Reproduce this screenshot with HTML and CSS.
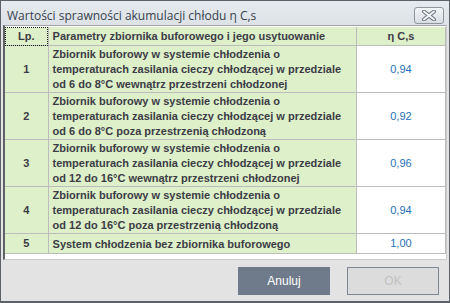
FILE: index.html
```html
<!DOCTYPE html>
<html lang="pl">
<head>
    <meta charset="UTF-8">
    <title>Wartości sprawności akumulacji chłodu</title>
    <link rel="stylesheet" href="styles.css">
</head>
<body>
    <div class="window">
        <div class="titlebar">
            <span class="title">Wartości sprawności akumulacji chłodu η C,s</span>
            <button class="close" title="Zamknij">
                <svg width="16" height="11" viewBox="0 0 16 11">
                    <path d="M3 1.5 L13 9.5 M13 1.5 L3 9.5" stroke="#6a737d" stroke-width="4" stroke-linecap="round"/>
                    <path d="M3 1.5 L13 9.5 M13 1.5 L3 9.5" stroke="#f4f6f8" stroke-width="2" stroke-linecap="round"/>
                </svg>
            </button>
        </div>

        <div class="pane">
            <table class="grid">
                <colgroup>
                    <col class="c-lp">
                    <col class="c-desc">
                    <col class="c-val">
                </colgroup>
                <tr class="head">
                    <th class="focus">Lp.</th>
                    <th class="left">Parametry zbiornika buforowego i jego usytuowanie</th>
                    <th>η C,s</th>
                </tr>
                <tr>
                    <td class="lp">1</td>
                    <td class="desc">Zbiornik buforowy w systemie chłodzenia o temperaturach zasilania cieczy chłodzącej w przedziale od 6 do 8°C wewnątrz przestrzeni chłodzonej</td>
                    <td class="val">0,94</td>
                </tr>
                <tr>
                    <td class="lp">2</td>
                    <td class="desc">Zbiornik buforowy w systemie chłodzenia o temperaturach zasilania cieczy chłodzącej w przedziale od 6 do 8°C poza przestrzenią chłodzoną</td>
                    <td class="val">0,92</td>
                </tr>
                <tr>
                    <td class="lp">3</td>
                    <td class="desc">Zbiornik buforowy w systemie chłodzenia o temperaturach zasilania cieczy chłodzącej w przedziale od 12 do 16°C wewnątrz przestrzeni chłodzonej</td>
                    <td class="val">0,96</td>
                </tr>
                <tr>
                    <td class="lp">4</td>
                    <td class="desc">Zbiornik buforowy w systemie chłodzenia o temperaturach zasilania cieczy chłodzącej w przedziale od 12 do 16°C poza przestrzenią chłodzoną</td>
                    <td class="val">0,94</td>
                </tr>
                <tr class="single">
                    <td class="lp">5</td>
                    <td class="desc">System chłodzenia bez zbiornika buforowego</td>
                    <td class="val">1,00</td>
                </tr>
            </table>
        </div>

        <div class="footer">
            <button class="btn primary">Anuluj</button>
            <button class="btn" disabled>OK</button>
        </div>
    </div>
</body>
</html>
```

FILE: styles.css
```css
html, body {
    margin: 0;
    padding: 0;
}
body {
    width: 450px;
    height: 303px;
    overflow: hidden;
    font-family: "Liberation Sans", Arial, sans-serif;
}
.window {
    box-sizing: border-box;
    width: 450px;
    height: 303px;
    border: 1px solid #5d6268;
    border-bottom-width: 2px;
    background: #e3e3e3;
    display: flex;
    flex-direction: column;
}
.titlebar {
    height: 24px;
    flex: none;
    display: flex;
    align-items: center;
    justify-content: space-between;
    padding: 0 5px 0 6px;
    background: linear-gradient(#e6eaee, #dde2e7);
}
.title {
    font-family: "Open Sans", sans-serif;
    font-size: 12px;
    color: #37424d;
    margin-top: 4px;
}
.close {
    width: 30px;
    height: 17px;
    margin-top: 4px;
    padding: 0;
    border: 1px solid #8d969f;
    border-radius: 3px;
    background: linear-gradient(#f3f5f7, #d9dee3);
    display: flex;
    align-items: center;
    justify-content: center;
}
.pane {
    flex: none;
    margin: 0 2px 0 2px;
    height: 232px;
    background: #fff;
    border-left: 2px solid #5f6368;
    border-top: 1px solid #a0a4a8;
    border-right: 1px solid #c9cbcd;
    border-bottom: 1px solid #c9cbcd;
    padding: 1px 0 0 0;
}
.grid {
    border-collapse: collapse;
    width: 441px;
    table-layout: fixed;
    font-size: 11px;
    color: #3c3c46;
}
.c-lp { width: 43px; }
.c-desc { width: 308px; }
.c-val { width: 89px; }
.grid th, .grid td {
    border: 1px solid #bcbcbc;
    padding: 0 4px;
    line-height: 15px;
}
.grid tr:first-child th { border-top: none; }
.grid th:first-child, .grid td:first-child { border-left: none; }
.head th {
    height: 18px;
    background: #ddf0c9;
    font-weight: bold;
    text-align: center;
}
.head th.left { text-align: left; }
.head th.focus {
    outline: 1px dotted #222;
    outline-offset: -1px;
}
.lp, .desc {
    background: #ddf0c9;
    font-weight: bold;
}
.lp { text-align: center; }
.desc { padding: 1px 4px 0 4px; height: 46px; }
.single .desc { height: 18px; padding: 1px 4px 0 4px; }
.val {
    text-align: center;
    color: #1f6fb8;
}
.footer {
    flex: 1;
    display: flex;
    justify-content: flex-end;
    align-items: center;
    gap: 17px;
    padding: 0 10px 0 0;
}
.btn {
    width: 92px;
    height: 28px;
    font-family: "Liberation Sans", Arial, sans-serif;
    font-size: 12px;
    border: 1px solid #7d8794;
    background: #dcdcdc;
    color: #c2c2c2;
}
.btn.primary {
    background: #6f7b8b;
    border-color: #6f7b8b;
    color: #fff;
}
```
